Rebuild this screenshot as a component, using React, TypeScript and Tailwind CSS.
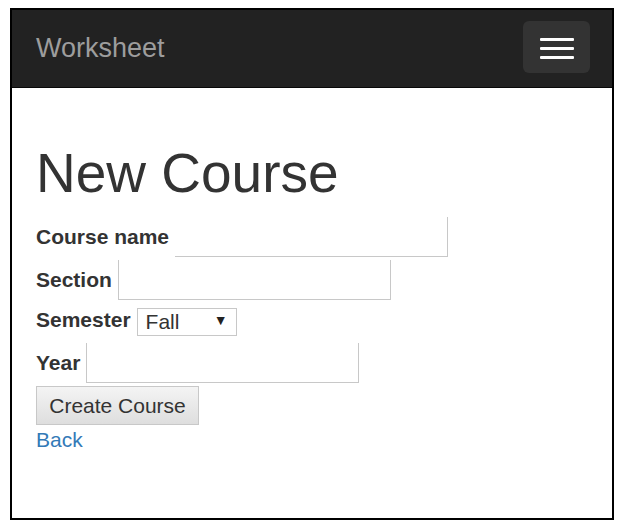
import React from "react";

interface Field {
    label: string;
    leftBorder: boolean;
}

const textFields: Field[] = [
    { label: "Course name", leftBorder: false },
    { label: "Section", leftBorder: true },
];

function TextInput({ leftBorder }: { leftBorder: boolean }) {
    return (
        <input
            type="text"
            className={
                leftBorder
                    ? "w-[273px] h-[40px] bg-white border-l border-b border-r border-[#c8c8c8] outline-none"
                    : "w-[273px] h-[40px] bg-white border-b border-r border-[#c8c8c8] outline-none"
            }
        />
    );
}

export default function App() {
    return (
        <div className="min-h-screen bg-white pt-[8px] pl-[10px] font-['Liberation_Sans',Arial,sans-serif] text-[#333]">
            <div className="w-[604px] h-[512px] border-2 border-black overflow-hidden">
                <nav className="h-[78px] bg-[#222] border-b border-[#080808] flex items-center justify-between pl-[24px] pr-[22px]">
                    <span className="text-[27px] text-[#9d9d9d] leading-none">Worksheet</span>
                    <button className="w-[67px] h-[52px] mt-[-3px] rounded-[6px] bg-[#333] flex flex-col items-center justify-center gap-[6px] pt-[3px]">
                        <span className="block w-[34px] h-[3px] rounded-[1px] bg-white" />
                        <span className="block w-[34px] h-[3px] rounded-[1px] bg-white" />
                        <span className="block w-[34px] h-[3px] rounded-[1px] bg-white" />
                    </button>
                </nav>

                <div className="pl-[24px]">
                    <h1 className="mt-[56px] text-[55px] leading-[59px] font-normal">New Course</h1>

                    <form className="mt-[14px] flex flex-col text-[21px]">
                        {textFields.map((field, index) => (
                            <div className={index === 0 ? "flex items-center gap-[6px] h-[40px]" : "flex items-center gap-[6px] h-[40px] mt-[3px]"} key={index}>
                                <label className="font-bold">{field.label}</label>
                                <TextInput leftBorder={field.leftBorder} />
                            </div>
                        ))}

                        <div className="flex items-center gap-[6px] h-[40px]">
                            <label className="font-bold">Semester</label>
                            <div className="relative w-[100px] h-[28px]">
                                <select className="appearance-none w-full h-full bg-white border border-[#c8c8c8] pl-[8px] text-[21px] leading-none outline-none">
                                    <option>Fall</option>
                                    <option>Spring</option>
                                    <option>Summer</option>
                                </select>
                                <span className="pointer-events-none absolute right-[9px] top-[7px] text-[14px] leading-none text-[#222]">▼</span>
                            </div>
                        </div>

                        <div className="flex items-center gap-[6px] h-[40px] mt-[3px]">
                            <label className="font-bold">Year</label>
                            <TextInput leftBorder={true} />
                        </div>

                        <div className="mt-[3px]">
                            <button
                                type="button"
                                className="h-[39px] w-[163px] border border-[#c8c8c8] bg-gradient-to-b from-[#f4f4f4] to-[#dedede] text-[21px] text-[#333]"
                            >
                                Create Course
                            </button>
                        </div>

                        <a href="#" className="text-[#337ab7] leading-[30px]">Back</a>
                    </form>
                </div>
            </div>
        </div>
    );
}
